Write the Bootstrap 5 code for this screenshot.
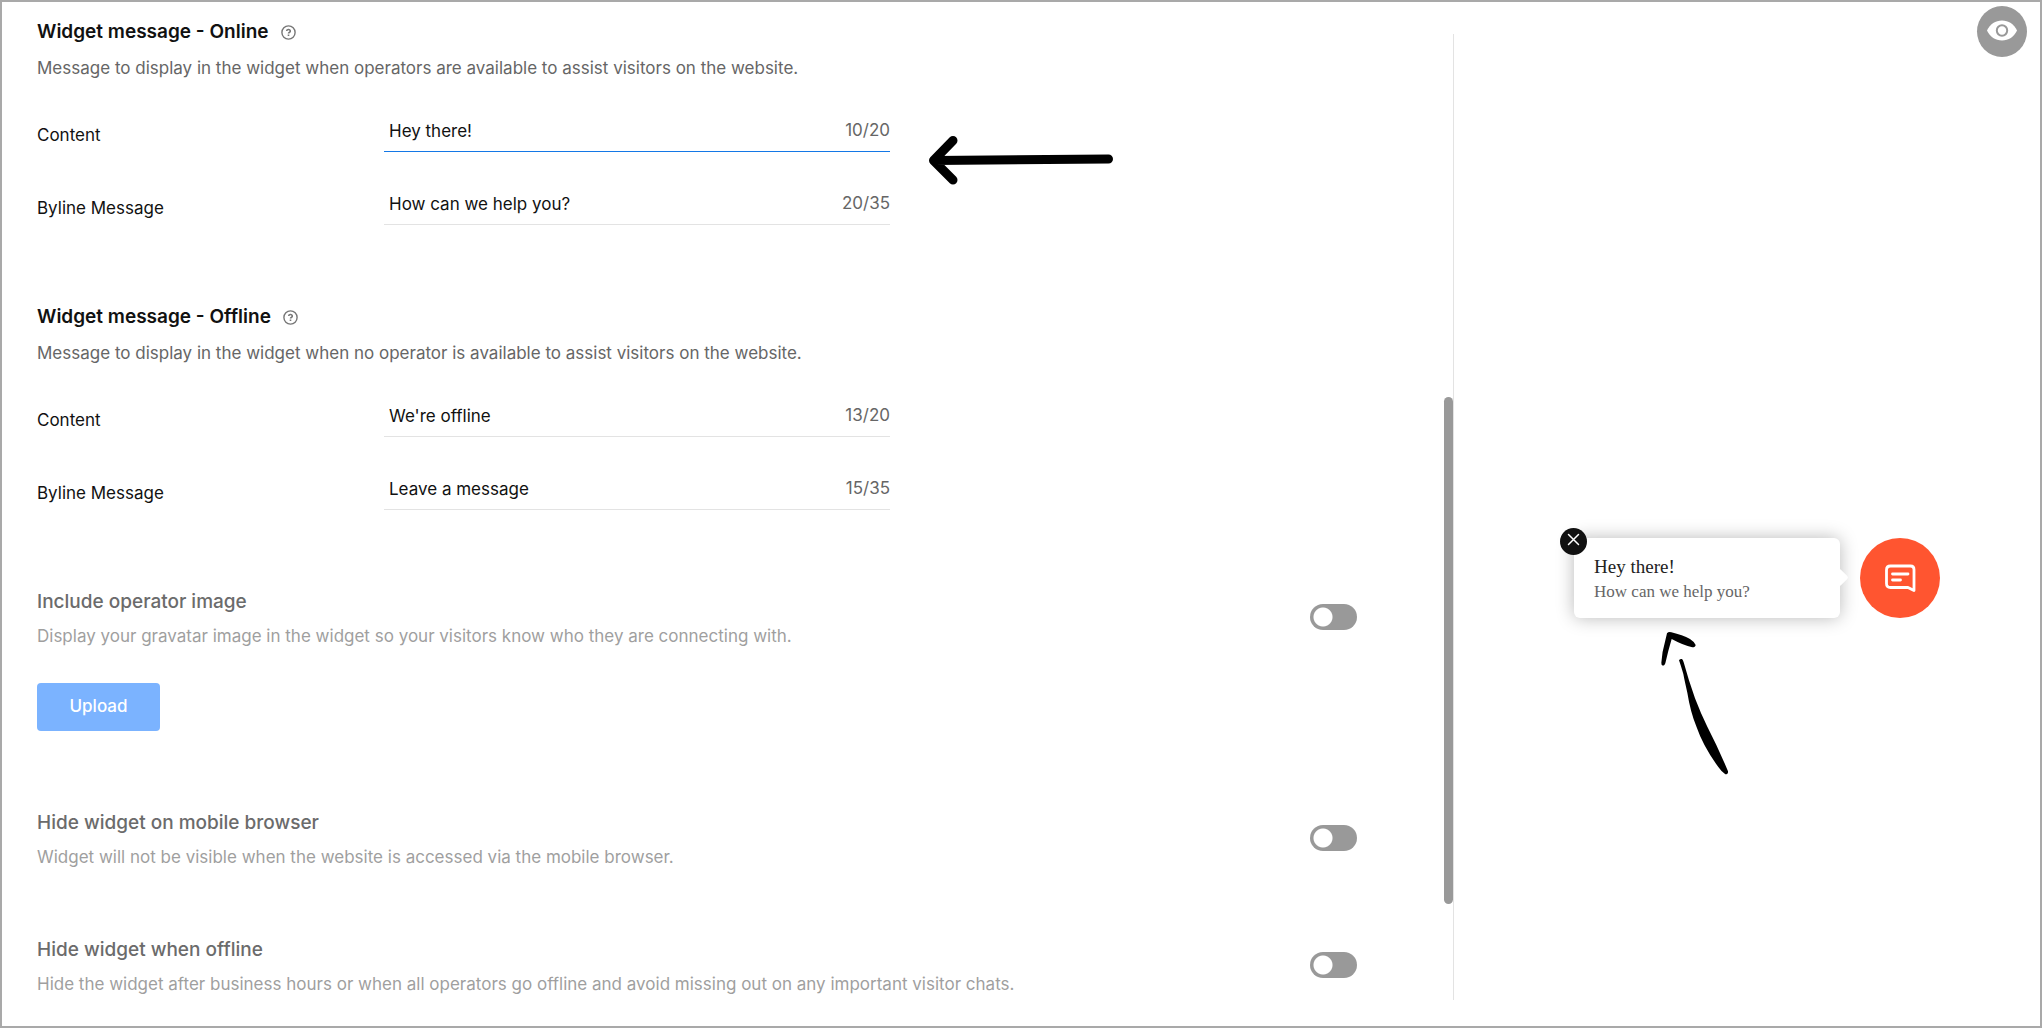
<!DOCTYPE html>
<html lang="en">
<head>
<meta charset="utf-8">
<meta name="viewport" content="width=device-width, initial-scale=1">
<title>Widget settings</title>
<link href="https://cdn.jsdelivr.net/npm/bootstrap@5.3.0/dist/css/bootstrap.min.css" rel="stylesheet">
<style>
body { font-family: Inter, "Liberation Sans", sans-serif; font-size: 17px; line-height: 24px; color: #111; background: #fff; }
.app-frame { min-height: 100vh; border: 2px solid #a9a9a9; }
.settings-pane { flex: 0 0 71.2%; padding: 18px 96px 24px 35px; }
.preview-pane { padding: 4px 13px; }
.pane-divider { width: 1px; margin: 32px 0 26px; background: #e3e3e3; }
.scroll-thumb { top: 395px; right: 0; width: 9px; height: 507px; border-radius: 5px; background: #999; }
.section-title { gap: 12px; font-size: 19px; line-height: 24px; font-weight: 600; }
.section-note { color: #666; }
.muted-title { color: #6b6b6b; font-weight: 500; font-size: 19px; line-height: 24px; }
.muted-note { color: #9f9f9f; }
.field-group { gap: 33px; margin-top: 32px; }
.field-label { flex: 0 0 347px; padding-top: 11px; }
.field-box { max-width: 506px; height: 40px; border-bottom: 1px solid #e3e3e3; }
.field-box.is-active { border-bottom-color: #1478e6; }
.field-box input { padding: 7px 5px 8px; line-height: 24px; font-size: 17px; color: #111; outline: 0; }
.field-count { padding-top: 6px; color: #666; }
.block-gap { margin-top: 80px; }
.block-gap-sm { margin-top: 69px; }
.title-gap { margin-bottom: 12px; }
.muted-gap { margin-bottom: 10px; }
.form-switch .form-check-input { width: 47px; height: 26px; margin: 14px 0 0; border: 0; border-radius: 13px; background: radial-gradient(circle at 13px 13px, #fff 9px, #999 10px); box-shadow: none; }
.upload-btn { width: 123px; height: 48px; margin-top: 35px; padding: 0; border: 0; border-radius: 4px; background: #7bb3ff; color: #fff; font-size: 17px; font-weight: 500; }
.eye-btn { width: 50px; height: 51px; background: #999; }
.widget-row { margin: 481px 87px 0 107px; gap: 20px; }
.bubble { height: 80px; padding: 16px 20px; border-radius: 6px; box-shadow: 0 0 18px rgba(0,0,0,.28); font-family: "Liberation Serif", serif; font-size: 17px; line-height: 25px; background: #fff; }
.bubble::after { content: ""; position: absolute; right: -6px; top: 33px; width: 13px; height: 13px; border-radius: 2px; background: #fff; transform: rotate(45deg); }
.bubble-title { font-size: 19px; color: #222; }
.bubble-byline { color: #666; }
.close-btn { left: -14px; top: -10px; width: 27px; height: 27px; background: #111; }
.chat-btn { flex: 0 0 80px; height: 80px; background: #ff5530; }
.arrow-left { left: 925px; top: 132px; }
.arrow-up { left: 1648px; top: 618px; }
</style>
</head>
<body>
<div class="app-frame d-flex position-relative">
  <main class="settings-pane position-relative">
    <section>
      <h2 class="section-title title-gap d-flex align-items-center">Widget message - Online
        <svg width="15" height="15" viewBox="0 0 15 15" fill="none" stroke="#777" stroke-width="1.4"><circle cx="7.500" cy="7.500" r="6.600"/><path d="M5.700 6.100a1.800 1.600 0 1 1 2.600 1.400c-.6.300-.8.500-.8 1.100" stroke-width="1.600"/><path d="M7.500 9.500v1.500" stroke-width="1.600"/></svg></h2>
      <p class="section-note mb-0">Message to display in the widget when operators are available to assist visitors on the website.</p>
      <div class="field-group d-flex flex-column">
        <div class="d-flex"><label class="field-label" for="on-content">Content</label>
          <div class="field-box is-active d-flex flex-grow-1"><input id="on-content" class="flex-grow-1 border-0 bg-transparent" type="text" value="Hey there!"><span class="field-count">10/20</span></div></div>
        <div class="d-flex"><label class="field-label" for="on-byline">Byline Message</label>
          <div class="field-box d-flex flex-grow-1"><input id="on-byline" class="flex-grow-1 border-0 bg-transparent" type="text" value="How can we help you?"><span class="field-count">20/35</span></div></div>
      </div>
    </section>
    <section class="block-gap">
      <h2 class="section-title title-gap d-flex align-items-center">Widget message - Offline
        <svg width="15" height="15" viewBox="0 0 15 15" fill="none" stroke="#777" stroke-width="1.4"><circle cx="7.500" cy="7.500" r="6.600"/><path d="M5.700 6.100a1.800 1.600 0 1 1 2.600 1.400c-.6.300-.8.500-.8 1.100" stroke-width="1.600"/><path d="M7.500 9.500v1.500" stroke-width="1.600"/></svg></h2>
      <p class="section-note mb-0">Message to display in the widget when no operator is available to assist visitors on the website.</p>
      <div class="field-group d-flex flex-column">
        <div class="d-flex"><label class="field-label" for="off-content">Content</label>
          <div class="field-box d-flex flex-grow-1"><input id="off-content" class="flex-grow-1 border-0 bg-transparent" type="text" value="We're offline"><span class="field-count">13/20</span></div></div>
        <div class="d-flex"><label class="field-label" for="off-byline">Byline Message</label>
          <div class="field-box d-flex flex-grow-1"><input id="off-byline" class="flex-grow-1 border-0 bg-transparent" type="text" value="Leave a message"><span class="field-count">15/35</span></div></div>
      </div>
    </section>
    <section class="block-gap">
      <div class="d-flex justify-content-between">
        <label for="sw-image"><span class="muted-title muted-gap d-block">Include operator image</span><span class="muted-note d-block">Display your gravatar image in the widget so your visitors know who they are connecting with.</span></label>
        <div class="form-switch p-0"><input class="form-check-input float-none d-block" type="checkbox" role="switch" id="sw-image"></div>
      </div>
      <button type="button" class="upload-btn btn d-block">Upload</button>
    </section>
    <section class="block-gap d-flex justify-content-between">
      <label for="sw-mobile"><span class="muted-title muted-gap d-block">Hide widget on mobile browser</span><span class="muted-note d-block">Widget will not be visible when the website is accessed via the mobile browser.</span></label>
      <div class="form-switch p-0"><input class="form-check-input float-none d-block" type="checkbox" role="switch" id="sw-mobile"></div>
    </section>
    <section class="block-gap-sm d-flex justify-content-between">
      <label for="sw-offline"><span class="muted-title muted-gap d-block">Hide widget when offline</span><span class="muted-note d-block">Hide the widget after business hours or when all operators go offline and avoid missing out on any important visitor chats.</span></label>
      <div class="form-switch p-0"><input class="form-check-input float-none d-block" type="checkbox" role="switch" id="sw-offline"></div>
    </section>
    <div class="scroll-thumb position-absolute"></div>
  </main>
  <div class="pane-divider"></div>
  <aside class="preview-pane flex-grow-1 d-flex flex-column">
    <button type="button" class="eye-btn border-0 rounded-circle p-0 align-self-end" aria-label="Preview">
      <svg class="d-block" width="50" height="51" viewBox="0 0 50 51"><path d="M10 24.500C13 18 18.500 14.500 25 14.500S37 18 40 24.500C37 31 31.500 34.500 25 34.500S13 31 10 24.500z" fill="#fff"/><circle cx="25" cy="24.500" r="5.200" fill="#fff" stroke="#999" stroke-width="2"/></svg>
    </button>
    <div class="widget-row d-flex">
      <div class="bubble position-relative flex-grow-1">
        <button type="button" class="close-btn position-absolute border-0 rounded-circle p-0" aria-label="Close"><svg class="d-block" width="27" height="27" viewBox="0 0 27 27" stroke="#fff" stroke-width="1.500" stroke-linecap="round"><path d="M8.500 6.500l10 10M18.500 6.500l-10 10"/></svg></button>
        <div class="bubble-title">Hey there!</div>
        <div class="bubble-byline">How can we help you?</div>
      </div>
      <button type="button" class="chat-btn border-0 rounded-circle p-0" aria-label="Open chat">
        <svg class="d-block" width="80" height="80" viewBox="0 0 80 80" fill="none" stroke="#fff" stroke-width="2.800" stroke-linecap="round" stroke-linejoin="round"><path d="M30.500 28h20q3.500 0 3.500 3.500V52.500l-6-3H30.500q-4 0-4-4V32q0-4 4-4z"/><path d="M32.500 36h15.500M32.500 42h8"/></svg>
      </button>
    </div>
  </aside>
  <svg class="arrow-left position-absolute pe-none" width="192" height="54" viewBox="0 0 192 54" fill="none" stroke="#000" stroke-width="9" stroke-linecap="round" stroke-linejoin="round"><path d="M26 6.500L6.500 26.500l19.500 19.500M7 26.500l174.500-1.500"/></svg>
  <svg class="arrow-up position-absolute pe-none" width="90" height="165" viewBox="0 0 270 495"><path d="M51 40Q56 34 64 37Q98 45 120 57Q134 66 137 75Q136 82 127 82Q100 76 65 57Q55 90 46 130Q44 137 39 137Q33 135 34 128Q36 95 45 65Z"/><path d="M87 121Q90 116 96 117Q99 119 101 127Q116 182 135 235Q152 280 172 320Q206 386 234 454Q235 463 226 463Q216 457 205 441Q160 380 140 322Q121 275 112 218Q104 183 100 162Q92 135 87 121Z"/></svg>
</div>
<script src="https://cdn.jsdelivr.net/npm/bootstrap@5.3.0/dist/js/bootstrap.bundle.min.js"></script>
</body>
</html>
